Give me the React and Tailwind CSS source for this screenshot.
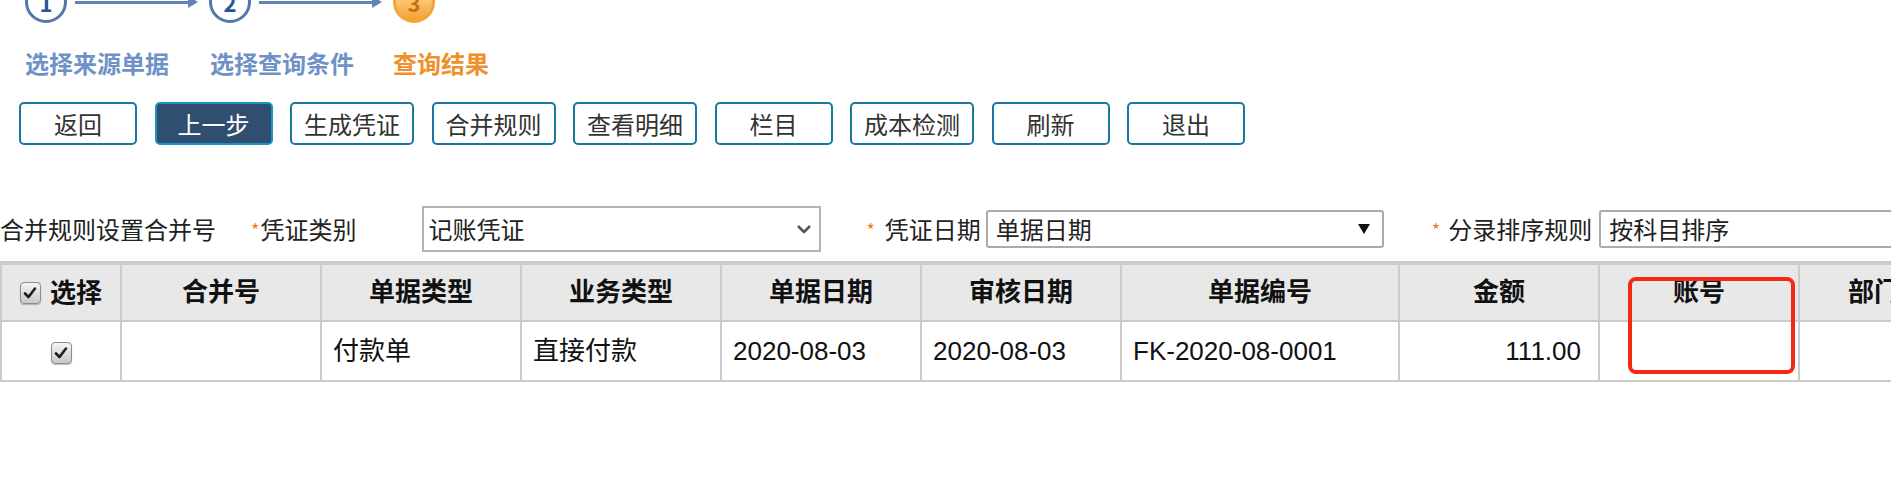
import React from 'react';

const buttons = ['返回', '上一步', '生成凭证', '合并规则', '查看明细', '栏目', '成本检测', '刷新', '退出'];

const columns = [
  { key: 'sel', title: '选择', w: 120 },
  { key: 'hb', title: '合并号', w: 200 },
  { key: 'djlx', title: '单据类型', w: 200 },
  { key: 'ywlx', title: '业务类型', w: 200 },
  { key: 'djrq', title: '单据日期', w: 200 },
  { key: 'shrq', title: '审核日期', w: 200 },
  { key: 'djbh', title: '单据编号', w: 278 },
  { key: 'je', title: '金额', w: 200 },
  { key: 'zh', title: '账号', w: 200 },
  { key: 'bm', title: '部门', w: 150 },
];

const rows = [
  { hb: '', djlx: '付款单', ywlx: '直接付款', djrq: '2020-08-03', shrq: '2020-08-03', djbh: 'FK-2020-08-0001', je: '111.00', zh: '', bm: '' },
];

function Checkbox() {
  return (
    <span className="inline-flex h-[22px] w-[21px] items-center justify-center rounded-[4px] border border-[#8c8c8c] bg-gradient-to-b from-[#f5f5f5] to-[#c9c9c9] align-middle shadow-[0_1px_1px_rgba(0,0,0,0.25)]">
      <svg width="14" height="14" viewBox="0 0 14 14">
        <path d="M2 7.5 L5.5 11 L12 2.5" fill="none" stroke="#1e1e1e" strokeWidth="2.6" strokeLinecap="round" strokeLinejoin="round" />
      </svg>
    </span>
  );
}

function Circle({ n, active }) {
  if (active) {
    return (
      <div className="flex h-[42px] w-[42px] shrink-0 items-center justify-center rounded-full border-[3px] border-[#f3a537] bg-gradient-to-b from-[#ffe3a0] to-[#f4a12c] text-[22px] font-bold text-[#c8710e]">
        {n}
      </div>
    );
  }
  return (
    <div className="flex h-[42px] w-[42px] shrink-0 items-center justify-center rounded-full border-[3px] border-[#5476ab] bg-white text-[22px] font-bold text-[#2a5596]">
      {n}
    </div>
  );
}

function Arrow() {
  return (
    <div className="ml-[8px] mr-[11px] flex w-[123px] shrink-0 items-center">
      <div className="h-[3px] flex-1 bg-[#6383b6]" />
      <svg width="10" height="12" viewBox="0 0 10 12">
        <path d="M0 0 L10 6 L0 12 Z" fill="#6383b6" />
      </svg>
    </div>
  );
}

function Star() {
  return <span className="mr-[4px] text-[18px] leading-none text-[#f07a22]">*</span>;
}

export default function App() {
  return (
    <div className="relative h-[483px] w-full overflow-hidden bg-white font-['Noto_Sans_CJK_SC',sans-serif] text-[#333]">
      {/* steps */}
      <div className="-mt-[19px] flex items-center pl-[25px]">
        <Circle n="1" />
        <Arrow />
        <Circle n="2" />
        <Arrow />
        <Circle n="3" active />
      </div>
      <div className="mt-[24px] flex pl-[25px] text-[24px] font-bold leading-[32px]">
        <div className="w-[185px] text-[#6f92c6]">选择来源单据</div>
        <div className="w-[183px] text-[#6f92c6]">选择查询条件</div>
        <div className="text-[#f0902a]">查询结果</div>
      </div>

      {/* toolbar */}
      <div className="mt-[23px] flex gap-[17.5px] pl-[19px]">
        {buttons.map((b) => (
          <button
            key={b}
            className={
              b === '上一步'
                ? 'h-[43px] min-w-[118px] shrink-0 rounded-[5px] border-2 border-[#1b92c4] bg-[#2f4e70] px-3 text-[24px] leading-none text-white'
                : 'h-[43px] min-w-[118px] shrink-0 rounded-[5px] border-2 border-[#17779f] bg-white px-3 text-[24px] leading-none text-[#333]'
            }
          >
            {b}
          </button>
        ))}
      </div>

      {/* filter row */}
      <div className="mt-[61px] flex h-[46px] items-center text-[24px] text-[#222]">
        <span className="w-[216px] shrink-0 whitespace-nowrap">合并规则设置合并号</span>
        <span className="ml-[35px] flex shrink-0 items-center whitespace-nowrap">
          <span className="mr-[1px] text-[18px] leading-none text-[#f07a22]">*</span>凭证类别
        </span>
        <div className="ml-[66px] flex h-[46px] w-[399px] shrink-0 items-center justify-between border-2 border-[#b4b4b4] bg-white pl-[4px] pr-[6px]">
          <span>记账凭证</span>
          <svg width="18" height="18" viewBox="0 0 24 24">
            <path d="M5 9 L12 16 L19 9" fill="none" stroke="#555" strokeWidth="3.5" strokeLinecap="round" strokeLinejoin="round" />
          </svg>
        </div>
        <span className="ml-[45px] flex shrink-0 items-center whitespace-nowrap">
          <Star />
          <span className="ml-[6px]">凭证日期</span>
        </span>
        <div className="ml-[5px] flex h-[38px] w-[398px] shrink-0 items-center justify-between rounded-[3px] border-2 border-[#ababab] bg-white pl-[8px] pr-[12px]">
          <span>单据日期</span>
          <svg width="12" height="12" viewBox="0 0 12 12">
            <path d="M0 1 L12 1 L6 11 Z" fill="#111" />
          </svg>
        </div>
        <span className="ml-[48px] flex shrink-0 items-center whitespace-nowrap">
          <Star />
          <span className="ml-[4px]">分录排序规则</span>
        </span>
        <div className="ml-[7px] flex h-[38px] w-[420px] shrink-0 items-center rounded-[3px] border-2 border-[#ababab] bg-white pl-[8px]">
          <span className="whitespace-nowrap">按科目排序</span>
        </div>
      </div>

      {/* grid */}
      <div className="mt-[9px] w-[2200px]">
        <table className="table-fixed border-collapse font-['Liberation_Sans','Noto_Sans_CJK_SC',sans-serif] text-[26px] text-[#111]">
          <colgroup>
            {columns.map((c) => (
              <col key={c.key} style={{ width: c.w }} />
            ))}
          </colgroup>
          <thead>
            <tr className="h-[58px] bg-[#e8e8e8]">
              {columns.map((c) => (
                <th key={c.key} className="border-x-2 border-t-4 border-b-2 border-[#cbcbcb] text-center font-bold">
                  {c.key === 'sel' ? (
                    <span className="inline-flex items-center gap-[9px]">
                      <Checkbox />
                      {c.title}
                    </span>
                  ) : (
                    c.title
                  )}
                </th>
              ))}
            </tr>
          </thead>
          <tbody>
            {rows.map((r, i) => (
              <tr key={i} className="h-[60px]">
                <td className="border-2 border-[#cbcbcb] text-center">
                  <Checkbox />
                </td>
                {columns.slice(1).map((c) => (
                  <td
                    key={c.key}
                    className={
                      c.key === 'je'
                        ? 'border-2 border-[#cbcbcb] pr-[17px] text-right'
                        : 'border-2 border-[#cbcbcb] pl-[11px] text-left'
                    }
                  >
                    {r[c.key]}
                  </td>
                ))}
              </tr>
            ))}
          </tbody>
        </table>
      </div>

      {/* annotation */}
      <div className="pointer-events-none absolute left-[1628px] top-[277px] h-[97px] w-[167px] rounded-[8px] border-4 border-[#f52816]" />
    </div>
  );
}
